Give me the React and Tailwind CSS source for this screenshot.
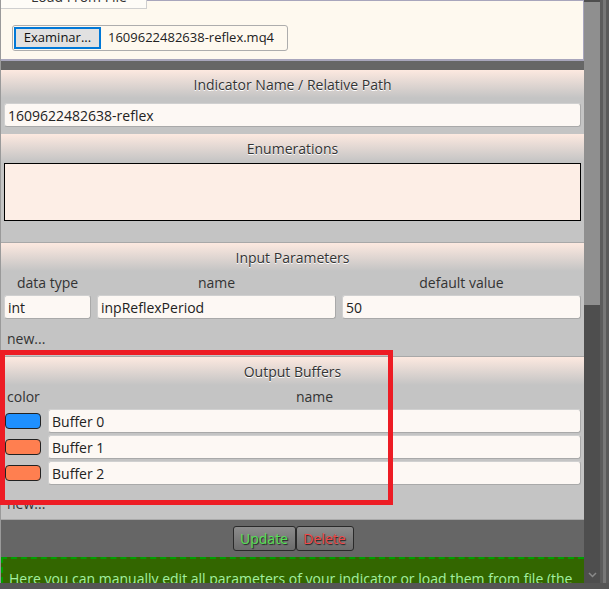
import React from "react";

const font = { fontFamily: '"Open Sans", "Noto Sans", sans-serif' };

function Header({ children }) {
  return (
    <div className="h-[28px] flex items-center justify-center bg-gradient-to-b from-[#fde9e0] to-[#c4c4c4] text-[14px] text-[#333] [text-shadow:0_1px_0_#fff]">
      {children}
    </div>
  );
}

function Field({ value, className = "" }) {
  return (
    <div
      className={
        "h-[24px] flex items-center px-[3px] bg-[#fdf8f4] border border-[#a9a9a9] border-l-[#d0d0d0] border-t-[#d0d0d0] rounded-[3px] text-[14px] text-[#222] " +
        className
      }
    >
      {value}
    </div>
  );
}

export default function App() {
  const buffers = [
    { name: "Buffer 0", color: "bg-[#1e90ff]" },
    { name: "Buffer 1", color: "bg-[#ff7f50]" },
    { name: "Buffer 2", color: "bg-[#ff7f50]" },
  ];

  return (
    <div className="w-[609px] h-[589px] overflow-hidden bg-[#4a4a4a] flex flex-col" style={font}>
      <div className="h-[583px] flex">
        {/* main content */}
        <div className="w-[584px] flex flex-col border-l border-[#9a9a9a] bg-[#666]">
          {/* load from file */}
          <div className="relative h-[61px] bg-[#fef9ef] border-t border-b-2 border-[#a8a6bc] border-r border-r-[#a8a6bc] pt-[24px] pl-[11px]">
            <div className="absolute left-0 top-[-1px] w-[146px] h-[9px] bg-[#fefcf7] border-r border-b border-[#cfcfcf] overflow-hidden">
              <div className="pl-[30px] mt-[-12px] text-[14px] text-[#333] leading-[18px] whitespace-nowrap">Load From File</div>
            </div>
            <div className="w-[276px] h-[26px] flex items-center gap-[7px] px-[1px] border border-[#adadad] rounded-[3px] text-[14px] text-[#222] whitespace-nowrap overflow-hidden">
              <div className="h-[22px] w-[87px] shrink-0 flex items-center justify-center bg-[#e1e1e1] border-2 border-[#0078d7] text-[13px] text-[#111]">
                Examinar...
              </div>
              <span className="text-[13px]">1609622482638-reflex.mq4</span>
            </div>
          </div>

          <div className="h-[9px] bg-[#666]" />

          {/* gray panel */}
          <div className="relative bg-[#c4c4c4] flex flex-col h-[450px] border-b border-[#aaa]">
            <Header>Indicator Name / Relative Path</Header>
            <div className="px-[3px] pt-[5px] pb-[7px]">
              <Field value="1609622482638-reflex" />
            </div>

            <Header>Enumerations</Header>
            <div className="px-[3px] pt-[1px]">
              <div className="h-[58px] bg-[#fdeee6] border border-black" />
            </div>

            <div className="mt-[21px] border-t border-[#a8a8a8]">
              <Header>Input Parameters</Header>
              <div className="flex gap-[6px] px-[3px] pt-[3px]">
                <div className="w-[87px] flex flex-col items-center">
                  <span className="text-[14px] text-[#333] leading-[18px]">data type</span>
                </div>
                <div className="w-[239px] flex flex-col items-center">
                  <span className="text-[14px] text-[#333] leading-[18px]">name</span>
                </div>
                <div className="flex-1 flex flex-col items-center">
                  <span className="text-[14px] text-[#333] leading-[18px]">default value</span>
                </div>
              </div>
              <div className="flex gap-[6px] px-[3px] pt-[3px]">
                <Field value="int" className="w-[87px]" />
                <Field value="inpReflexPeriod" className="w-[239px]" />
                <Field value="50" className="flex-1" />
              </div>
              <div className="px-[6px] pt-[9px] h-[37px] text-[14px] text-[#333]">new...</div>
            </div>

            <div className="border-t border-[#a8a8a8]">
              <Header>Output Buffers</Header>
              <div className="flex px-[3px] pt-[3px] text-[14px] text-[#333] leading-[18px]">
                <span className="w-[44px] pl-[3px]">color</span>
                <span className="flex-1 text-center">name</span>
              </div>
              <div className="flex flex-col gap-[2px] px-[3px] pt-[3px]">
                {buffers.map((b) => (
                  <div key={b.name} className="flex items-center gap-[7px]">
                    <div className={"w-[36px] h-[16px] ml-[1px] rounded-[4px] border border-[#222] " + b.color} />
                    <Field value={b.name} className="flex-1" />
                  </div>
                ))}
              </div>
              <div className="px-[6px] pt-[10px] text-[14px] text-[#333] leading-[18px]">new...</div>
            </div>

            {/* red highlight overlay */}
            <div className="absolute left-[-1px] top-[280px] w-[393px] h-[155px] border-[5px] border-[#ed1c24]" />
          </div>

          {/* buttons */}
          <div className="h-[37px] flex items-center justify-center bg-[#666] pl-[1px]">
            <div className="flex">
              <div className="h-[25px] w-[63px] flex items-center justify-center rounded-[3px] border border-[#2a2a2a] bg-gradient-to-b from-[#8c8c8c] to-[#6c6c6c] text-[14px] text-[#55e055] [text-shadow:1px_1px_1px_#222]">
                Update
              </div>
              <div className="h-[25px] w-[58px] flex items-center justify-center rounded-[3px] border border-[#2a2a2a] bg-gradient-to-b from-[#8c8c8c] to-[#6c6c6c] text-[14px] text-[#f04848] [text-shadow:1px_1px_1px_#222]">
                Delete
              </div>
            </div>
          </div>

          {/* info box */}
          <div className="flex-1 bg-[#336600] border-t-2 border-l-2 border-dashed border-[#00a000] pl-[6px] pt-[10px] overflow-hidden">
            <div className="text-[14px] text-[#a4f0a0] whitespace-nowrap leading-[20px]">
              Here you can manually edit all parameters of your indicator or load them from file (the
            </div>
          </div>
        </div>

        {/* scrollbar */}
        <div className="w-[16px] bg-[#4e4e4e] flex flex-col pt-[2px]">
          <div className="h-[303px] bg-[#8f8f8f]" />
          <div className="flex-1" />
          <div className="h-[16px] flex items-center justify-center">
            <svg width="9" height="6" viewBox="0 0 9 6">
              <path d="M1 1l3.5 3.5L8 1" fill="none" stroke="#8a8a8a" strokeWidth="1.5" />
            </svg>
          </div>
        </div>

        {/* outer frame */}
        <div className="w-[9px] flex">
          <div className="w-[3px] bg-[#5c5c5c]" />
          <div className="w-[3px] bg-[#777]" />
          <div className="w-[3px] bg-[#5a5a5a]" />
        </div>
      </div>
      <div className="flex-1 bg-[#555]" />
    </div>
  );
}
